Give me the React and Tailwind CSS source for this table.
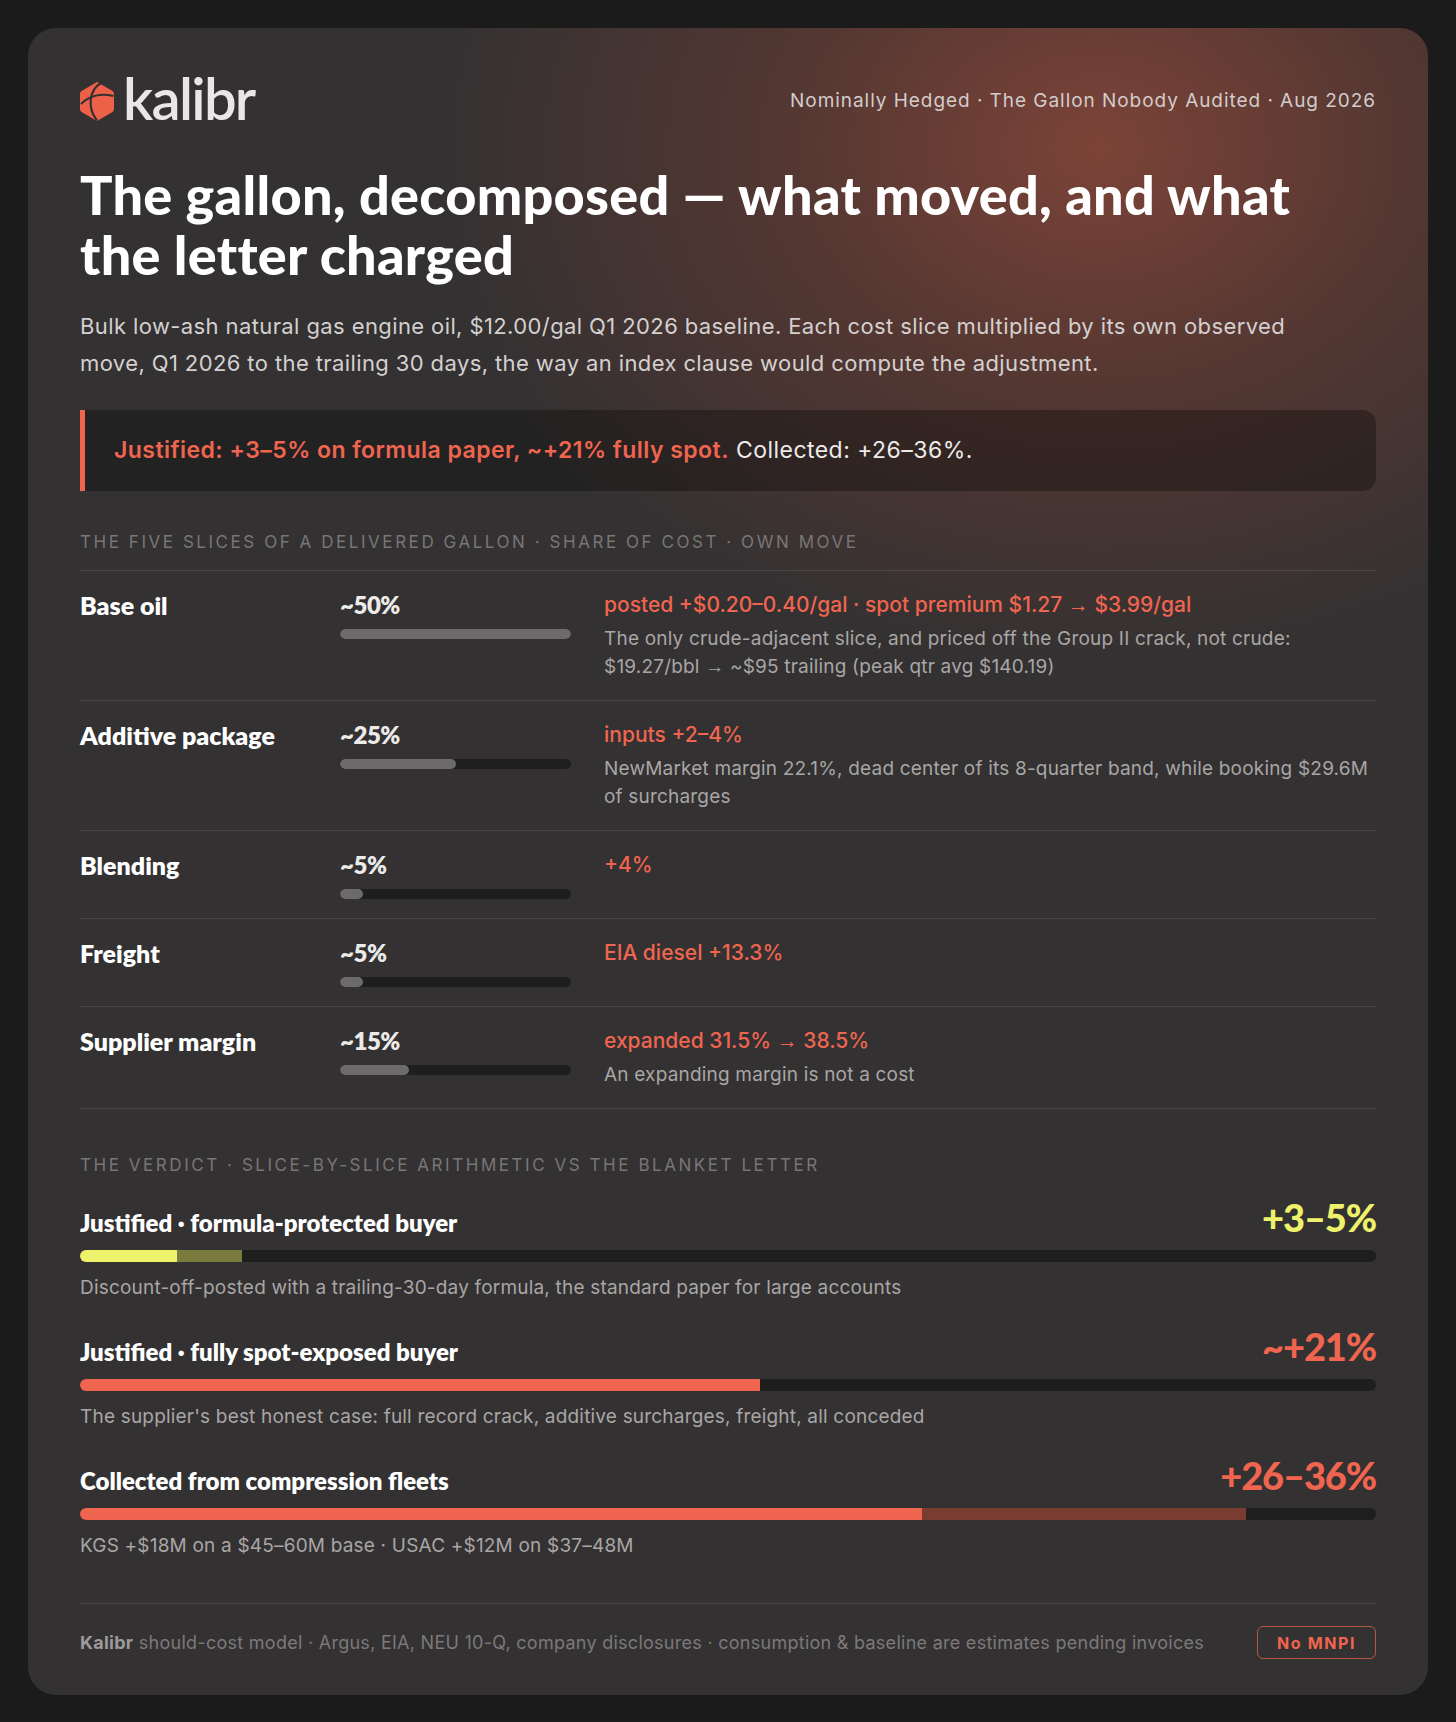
import React from "react";

const slices = [
  {
    name: "Base oil",
    share: "~50%",
    fill: 100,
    move: "posted +$0.20–0.40/gal · spot premium $1.27 → $3.99/gal",
    note: "The only crude-adjacent slice, and priced off the Group II crack, not crude: $19.27/bbl → ~$95 trailing (peak qtr avg $140.19)",
  },
  {
    name: "Additive package",
    share: "~25%",
    fill: 50,
    move: "inputs +2–4%",
    note: "NewMarket margin 22.1%, dead center of its 8-quarter band, while booking $29.6M of surcharges",
  },
  { name: "Blending", share: "~5%", fill: 10, move: "+4%" },
  { name: "Freight", share: "~5%", fill: 10, move: "EIA diesel +13.3%" },
  {
    name: "Supplier margin",
    share: "~15%",
    fill: 30,
    move: "expanded 31.5% → 38.5%",
    note: "An expanding margin is not a cost",
  },
];

// bars are drawn on a 0–40% scale
const verdicts = [
  {
    label: "Justified · formula-protected buyer",
    value: "+3–5%",
    valueClass: "text-[#eef26b]",
    segs: [
      { w: 7.5, c: "bg-[#eef26b]" },
      { w: 5, c: "bg-[#7b7b40]" },
    ],
    note: "Discount-off-posted with a trailing-30-day formula, the standard paper for large accounts",
  },
  {
    label: "Justified · fully spot-exposed buyer",
    value: "~+21%",
    valueClass: "text-[#f0654f]",
    segs: [{ w: 52.5, c: "bg-[#f0654f]" }],
    note: "The supplier's best honest case: full record crack, additive surcharges, freight, all conceded",
  },
  {
    label: "Collected from compression fleets",
    value: "+26–36%",
    valueClass: "text-[#f0654f]",
    segs: [
      { w: 65, c: "bg-[#f0654f]" },
      { w: 25, c: "bg-[#7a3b31]" },
    ],
    note: "KGS +$18M on a $45–60M base · USAC +$12M on $37–48M",
  },
];

const display = "font-['Lato','Inter',sans-serif]";

// Inter's arrow is chunky, the original has a thin one
function Arrows({ text }) {
  const parts = text.split("→");
  return parts.map((p, i) => (
    <React.Fragment key={i}>
      {p}
      {i < parts.length - 1 && <span className="font-['Roboto',sans-serif] font-normal leading-none">→</span>}
    </React.Fragment>
  ));
}

function Logo() {
  return (
    <div className="flex items-center gap-[9px]">
      <svg width="34" height="41" viewBox="0 0 34 41">
        <path
          d="M17 1 L32.5 10 Q34 11 34 13 L34 28 Q34 30 32.5 31 L17 40 L1.5 31 Q0 30 0 28 L0 13 Q0 11 1.5 10 Z"
          fill="#ee6149"
        />
        <path d="M21 2 C9 9 7 27 17 39.5" stroke="#333132" strokeWidth="2.2" fill="none" />
        <path d="M1 23 C9 15 21 12 33.5 15" stroke="#333132" strokeWidth="2.2" fill="none" />
      </svg>
      <span className={`${display} text-[58px] leading-none font-semibold tracking-[-0.03em] text-[#e8e6e6] -mt-[6px]`}>
        kalibr
      </span>
    </div>
  );
}

function SectionLabel({ children }) {
  return (
    <div className="text-[17px] leading-[20px] uppercase tracking-[0.15em] text-[#787676]">{children}</div>
  );
}

export default function App() {
  return (
    <div className="min-h-screen bg-[#1b1b1b] p-[28px] font-['Inter','Roboto',sans-serif]">
      <div className="rounded-[28px] bg-[#333132] bg-[radial-gradient(ellipse_900px_700px_at_1070px_120px,rgba(128,68,56,0.95)_0%,rgba(110,60,50,0.55)_35%,rgba(51,49,50,0)_75%)] px-[52px] pt-[52px] pb-[36px]">
        <div className="flex items-center justify-between h-[42px]">
          <Logo />
          <div className="text-[19px] tracking-[0.05em] text-[#d2cccb]">
            Nominally Hedged · The Gallon Nobody Audited · Aug 2026
          </div>
        </div>

        <h1 className={`${display} mt-[43px] text-[54px] leading-[60px] font-black tracking-[0.005em] text-white`}>
          The gallon, decomposed — what moved, and what
          <br />
          the letter charged
        </h1>

        <p className="mt-[23px] max-w-[1230px] text-[22px] leading-[37px] tracking-[0.018em] text-[#d4d0cf]">
          Bulk low-ash natural gas engine oil, $12.00/gal Q1 2026 baseline. Each cost slice multiplied by its own observed move, Q1 2026 to the trailing 30 days, the way an index clause would compute the adjustment.
        </p>

        <div className="mt-[28px] h-[81px] flex items-center border-l-[5px] border-[#f0654f] rounded-r-[14px] bg-black/30 pl-[29px] text-[23px] tracking-[0.02em]">
          <span className="font-semibold text-[#f0654f]">Justified: +3–5% on formula paper, ~+21% fully spot.</span>
          <span className="ml-[7px] text-[#ecebea]">Collected: +26–36%.</span>
        </div>

        <div className="mt-[41px] pb-[18px]">
          <SectionLabel>The five slices of a delivered gallon · share of cost · own move</SectionLabel>
        </div>

        <div className="border-b border-white/10">
          {slices.map((s) => (
            <div
              key={s.name}
              className="grid grid-cols-[227px_231px_1fr] gap-x-[33px] border-t border-white/10 pt-[20px] pb-[19px]"
            >
              <div className={`${display} text-[25px] leading-[28px] font-extrabold text-white`}>{s.name}</div>
              <div>
                <div className={`${display} text-[24px] leading-[28px] font-extrabold text-[#ecebea] tracking-[-0.02em]`}>{s.share}</div>
                <div className="mt-[10px] h-[10px] rounded-full bg-[#1f1e1f] overflow-hidden">
                  <div className="h-full rounded-full bg-[#6c6a6b]" style={{ width: `${s.fill}%` }} />
                </div>
              </div>
              <div>
                <div className="text-[21px] leading-[28px] font-medium text-[#f0654f]">
                  <Arrows text={s.move} />
                </div>
                {s.note && (
                  <div className="mt-[6px] text-[19px] leading-[28px] tracking-[0.01em] text-[#a9a6a5]">
                    <Arrows text={s.note} />
                  </div>
                )}
              </div>
            </div>
          ))}
        </div>

        <div className="mt-[46px]">
          <SectionLabel>The verdict · slice-by-slice arithmetic vs the blanket letter</SectionLabel>
        </div>

        <div className="mt-[22px] flex flex-col gap-[24px]">
          {verdicts.map((v) => (
            <div key={v.label}>
              <div className="flex items-baseline justify-between">
                <div className={`${display} text-[24px] font-extrabold text-white`}>{v.label}</div>
                <div className={`${display} text-[38px] leading-[40px] font-black tracking-[-0.03em] ${v.valueClass}`}>
                  {v.value}
                </div>
              </div>
              <div className="mt-[9px] h-[12px] rounded-full bg-[#1f1e1f] overflow-hidden flex">
                {v.segs.map((seg, i) => (
                  <div key={i} className={`h-full ${seg.c}`} style={{ width: `${seg.w}%` }} />
                ))}
              </div>
              <div className="mt-[12px] text-[19px] leading-[28px] tracking-[0.01em] text-[#a9a6a5]">{v.note}</div>
            </div>
          ))}
        </div>

        <div className="mt-[43px] border-t border-white/10 pt-[22px] flex items-center justify-between">
          <div className="text-[18px] tracking-[0.015em] text-[#7b7979]">
            <span className="font-bold text-[#9c9a9a]">Kalibr</span> should-cost model · Argus, EIA, NEU 10-Q, company disclosures · consumption &amp; baseline are estimates pending invoices
          </div>
          <div className="h-[33px] px-[19px] flex items-center rounded-[6px] border-[1.5px] border-[#f0654f]/70 text-[16px] font-bold tracking-[0.1em] text-[#f0654f]">
            No MNPI
          </div>
        </div>
      </div>
    </div>
  );
}
